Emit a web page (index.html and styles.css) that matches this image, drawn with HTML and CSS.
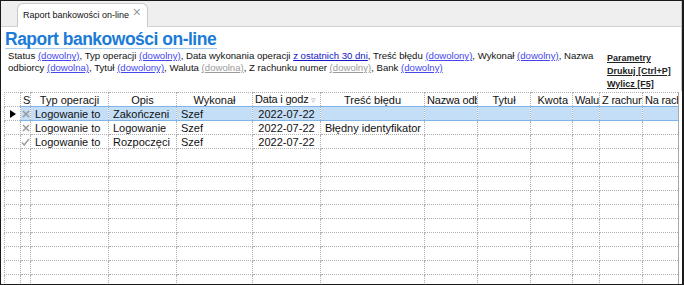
FILE: index.html
```html
<!DOCTYPE html>
<html>
<head>
<meta charset="utf-8">
<link rel="stylesheet" href="styles.css">
</head>
<body>
<div class="frame">
  <div class="tabbar">
    <div class="tab"><span class="tab-title">Raport bankowości on-line</span><span class="tab-close">×</span></div>
  </div>
  <div class="head">
    <div class="main">
      <div class="title">Raport bankowości on-line</div>
      <div class="filters">Status <a class="lnk">(dowolny)</a>, Typ operacji <a class="lnk">(dowolny)</a>, Data wykonania operacji <a class="lnk dark">z ostatnich 30 dni</a>, Treść błędu <a class="lnk">(dowolony)</a>, Wykonał <a class="lnk">(dowolny)</a>, Nazwa odbiorcy <a class="lnk">(dowolna)</a>, Tytuł <a class="lnk">(dowolony)</a>, Waluta <a class="lnk gray">(dowolna)</a>, Z rachunku numer <a class="lnk gray">(dowolny)</a>, Bank <a class="lnk">(dowolny)</a></div>
    </div>
    <div class="actions">
      <a class="act">Parametry</a>
      <a class="act">Drukuj [Ctrl+P]</a>
      <a class="act">Wylicz [F5]</a>
    </div>
  </div>
  <table class="grid">
    <colgroup>
      <col class="c16"><col class="c10"><col class="c78"><col class="c68"><col class="c76"><col class="c68"><col class="c104"><col class="c53"><col class="c53"><col class="c42"><col class="c27"><col class="c43"><col class="c36">
    </colgroup>
    <thead>
      <tr>
        <th></th><th class="l">S</th><th>Typ operacji</th><th>Opis</th><th>Wykonał</th><th class="l">Data i godz <span class="sort">▿</span></th><th>Treść błędu</th><th class="l">Nazwa odbiorcy</th><th>Tytuł</th><th class="r">Kwota</th><th class="l">Waluta</th><th class="l">Z rachunku</th><th class="l">Na rachunek</th>
      </tr>
    </thead>
    <tbody>
      <tr class="sel">
        <td class="ind"><svg width="6" height="8" viewBox="0 0 6 8"><path d="M0 0 L6 4 L0 8 Z" fill="#000"/></svg></td>
        <td class="ic"><svg width="8" height="8" viewBox="0 0 8 8"><path d="M1 1 L7 7 M7 1 L1 7" stroke="#9a9a9a" stroke-width="1.6"/></svg></td>
        <td>Logowanie to</td><td>Zakończeni</td><td>Szef</td><td class="c">2022-07-22</td><td></td><td></td><td></td><td></td><td></td><td></td><td></td>
      </tr>
      <tr>
        <td class="ind"></td>
        <td class="ic"><svg width="8" height="8" viewBox="0 0 8 8"><path d="M1 1 L7 7 M7 1 L1 7" stroke="#9a9a9a" stroke-width="1.6"/></svg></td>
        <td>Logowanie to</td><td>Logowanie</td><td>Szef</td><td class="c">2022-07-22</td><td>Błędny identyfikator</td><td></td><td></td><td></td><td></td><td></td><td></td>
      </tr>
      <tr>
        <td class="ind"></td>
        <td class="ic"><svg width="9" height="8" viewBox="0 0 9 8"><path d="M1 4.5 L3.2 7 L8 1" stroke="#9a9a9a" stroke-width="1.4" fill="none"/></svg></td>
        <td>Logowanie to</td><td>Rozpoczęci</td><td>Szef</td><td class="c">2022-07-22</td><td></td><td></td><td></td><td></td><td></td><td></td><td></td>
      </tr>
      <tr><td></td><td></td><td></td><td></td><td></td><td></td><td></td><td></td><td></td><td></td><td></td><td></td><td></td></tr>
      <tr><td></td><td></td><td></td><td></td><td></td><td></td><td></td><td></td><td></td><td></td><td></td><td></td><td></td></tr>
      <tr><td></td><td></td><td></td><td></td><td></td><td></td><td></td><td></td><td></td><td></td><td></td><td></td><td></td></tr>
      <tr><td></td><td></td><td></td><td></td><td></td><td></td><td></td><td></td><td></td><td></td><td></td><td></td><td></td></tr>
      <tr><td></td><td></td><td></td><td></td><td></td><td></td><td></td><td></td><td></td><td></td><td></td><td></td><td></td></tr>
      <tr><td></td><td></td><td></td><td></td><td></td><td></td><td></td><td></td><td></td><td></td><td></td><td></td><td></td></tr>
      <tr><td></td><td></td><td></td><td></td><td></td><td></td><td></td><td></td><td></td><td></td><td></td><td></td><td></td></tr>
      <tr><td></td><td></td><td></td><td></td><td></td><td></td><td></td><td></td><td></td><td></td><td></td><td></td><td></td></tr>
      <tr><td></td><td></td><td></td><td></td><td></td><td></td><td></td><td></td><td></td><td></td><td></td><td></td><td></td></tr>
      <tr><td></td><td></td><td></td><td></td><td></td><td></td><td></td><td></td><td></td><td></td><td></td><td></td><td></td></tr>
      <tr><td></td><td></td><td></td><td></td><td></td><td></td><td></td><td></td><td></td><td></td><td></td><td></td><td></td></tr>
    </tbody>
  </table>
</div>
</body>
</html>
```

FILE: styles.css
```css
* { box-sizing: border-box; }
html, body { margin: 0; padding: 0; background: #fff; }
.frame {
  width: 684px;
  height: 285px;
  border: 1px solid #1a1a1a;
  border-right: 2px solid #1a1a1a;
  overflow: hidden;
  background: #fff;
  font-family: "Liberation Sans", Arial, sans-serif;
  color: #111;
}
.tabbar {
  height: 26px;
  background: #efefef;
  border-bottom: 1px solid #d2d2d2;
  border-right: 1px solid #c8c8c8;
  padding-left: 16px;
  display: flex;
  align-items: flex-end;
}
.tab {
  width: 131px;
  height: 24px;
  margin-bottom: -1px;
  background: #fff;
  border: 1px solid #cacaca;
  border-bottom: none;
  border-radius: 6px 6px 0 0;
  display: flex;
  align-items: center;
  justify-content: space-between;
  padding: 0 6px 2px 5px;
  font-size: 9px;
  color: #111;
  white-space: nowrap;
}
.tab-title { white-space: nowrap; }
.tab-close { color: #9a9a9a; font-size: 14px; line-height: 10px; margin-top: -6px; }
.head { display: flex; border-right: 1px solid #c8c8c8; }
.main { width: 600px; padding-left: 4px; }
.title {
  display: inline-block;
  margin-top: 3px;
  font-size: 17.5px;
  letter-spacing: -0.5px;
  font-weight: bold;
  line-height: 18px;
  color: #1b7bd6;
  border-bottom: 1px solid #a5cdf0;
  padding-right: 1px;
}
.filters {
  font-size: 9.6px;
  line-height: 12px;
  padding-left: 3px;
  padding-top: 1px;
  color: #111;
}
.lnk { color: #4646f0; text-decoration: underline; }
.lnk.dark { color: #1414c8; }
.lnk.gray { color: #9a9a9a; }
.actions {
  display: flex;
  flex-direction: column;
  padding-top: 25px;
  padding-left: 6px;
}
.act {
  font-size: 9px;
  font-weight: bold;
  line-height: 13px;
  color: #222;
  text-decoration: underline;
  white-space: nowrap;
}
.grid {
  margin-left: 3px;
  margin-top: 1px;
  border-collapse: collapse;
  table-layout: fixed;
  width: 674px;
  font-size: 11px;
}
.c16 { width: 16px; } .c10 { width: 10px; } .c78 { width: 78px; } .c68 { width: 68px; }
.c76 { width: 76px; } .c104 { width: 104px; } .c53 { width: 53px; } .c42 { width: 42px; }
.c27 { width: 27px; } .c43 { width: 43px; } .c36 { width: 36px; }
.grid th, .grid td {
  height: 14px;
  padding: 0 4px;
  line-height: 12px;
  border: 1px dotted #b0b0b0;
  white-space: nowrap;
  overflow: hidden;
  text-overflow: clip;
  text-align: left;
  font-weight: normal;
}
.grid th { text-align: center; color: #111; }
.grid th.l { text-align: left; padding-left: 2px; letter-spacing: -0.2px; }
.grid th.r { text-align: right; }
.grid td.c { text-align: center; }
.grid tr > :last-child { border-right: 1px solid #a8a8a8; }
.sort { color: #aaa; font-size: 9px; }
.grid td.ind, .grid td.ic { padding: 0; text-align: center; }
.grid td.ind svg, .grid td.ic svg { display: block; margin: 0 auto; }
.grid tr.sel td { background: #c3def6; border-top: 1px solid #7fb4e6; border-bottom: 1px solid #7fb4e6; }
.grid tr.sel td.ind { background: #fff; border-top: 1px dotted #b0b0b0; border-bottom: 1px dotted #b0b0b0; }
```
